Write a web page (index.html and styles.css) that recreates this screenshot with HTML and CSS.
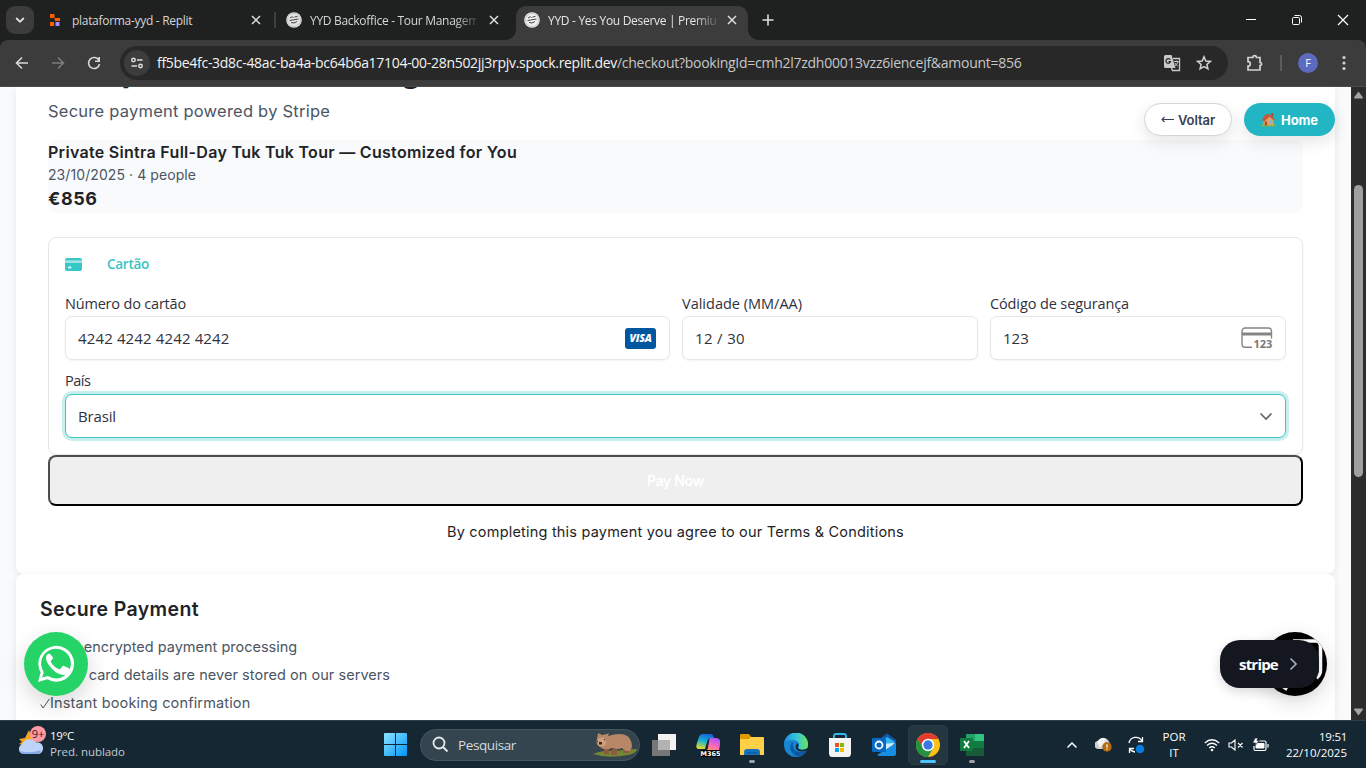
FILE: index.html
```html
<!DOCTYPE html>
<html lang="pt">
<head>
<meta charset="utf-8">
<title>YYD - Yes You Deserve | Premium</title>
<link rel="stylesheet" href="styles.css">
</head>
<body>
<div class="screen">
  <header class="tabstrip">
    <button class="tab-search"><svg width="12" height="12" viewBox="0 0 12 12" fill="none" stroke="#e3e3e3" stroke-width="1.8"><path d="M2.2 4 6 7.8 9.8 4"/></svg></button>
    <div class="tab tab-one">
      <svg class="fav" width="16" height="16" viewBox="0 0 16 16"><path fill="#ff5c00" d="M2 2h4.500v4H2zM6.500 6H12v3H7zM2 10h4v4H2z"/><path fill="#a68cff" d="M7.500 10h4v4h-4z"/></svg>
      <span class="tab-title">plataforma-yyd - Replit</span>
      <svg class="x" width="10" height="10" viewBox="0 0 10 10" stroke="#dedede" stroke-width="1.5"><path d="M1 1l8 8M9 1 1 9"/></svg>
    </div>
    <div class="tab tab-two">
      <svg class="fav" width="16" height="16" viewBox="0 0 16 16"><circle cx="8" cy="8" r="7.800" fill="#e4e4e4"/><circle cx="8" cy="8" r="6.500" fill="none" stroke="#aaa" stroke-width=".6"/><path d="M4 6l2.500-1.300 1 1M8.500 5l3-.6M3.500 8.500l9-1.500M5 10.500q3 1.500 6-1" fill="none" stroke="#444" stroke-width="1"/></svg>
      <span class="tab-title fade">YYD Backoffice - Tour Managem</span>
      <svg class="x" width="10" height="10" viewBox="0 0 10 10" stroke="#dedede" stroke-width="1.5"><path d="M1 1l8 8M9 1 1 9"/></svg>
    </div>
    <div class="tab tab-active">
      <svg class="fav" width="16" height="16" viewBox="0 0 16 16"><circle cx="8" cy="8" r="7.800" fill="#f0f0f0"/><circle cx="8" cy="8" r="6.500" fill="none" stroke="#aaa" stroke-width=".6"/><path d="M4 6l2.500-1.300 1 1M8.500 5l3-.6M3.500 8.500l9-1.500M5 10.500q3 1.500 6-1" fill="none" stroke="#444" stroke-width="1"/></svg>
      <span class="tab-title fade">YYD - Yes You Deserve | Premiu</span>
      <svg class="x" width="10" height="10" viewBox="0 0 10 10" stroke="#dedede" stroke-width="1.5"><path d="M1 1l8 8M9 1 1 9"/></svg>
    </div>
    <svg class="plus" width="12" height="12" viewBox="0 0 12 12" stroke="#dedede" stroke-width="1.6"><path d="M6 .5v11M.5 6h11"/></svg>
    <div class="window-controls">
      <svg width="12" height="12" viewBox="0 0 12 12" stroke="#fff" fill="none"><path d="M1 5.500h10"/></svg>
      <svg width="12" height="12" viewBox="0 0 12 12" stroke="#fff" fill="none"><rect x="1.500" y="3.500" width="7" height="7" rx="1"/><path d="M3.500 1.500h5a2 2 0 0 1 2 2v5"/></svg>
      <svg width="12" height="12" viewBox="0 0 12 12" stroke="#fff" stroke-width="1.200" fill="none"><path d="M1 1l10 10M11 1 1 11"/></svg>
    </div>
  </header>

  <div class="toolbar-back"><div class="toolbar">
    <svg width="16" height="16" viewBox="0 0 16 16" fill="none" stroke="#d8d8d8" stroke-width="1.600"><path d="M14 8H3M8 2.500 2.500 8 8 13.500"/></svg>
    <svg width="16" height="16" viewBox="0 0 16 16" fill="none" stroke="#7c7c7c" stroke-width="1.600"><path d="M2 8h11M8 2.500 13.500 8 8 13.500"/></svg>
    <svg width="16" height="16" viewBox="0 0 16 16" fill="none" stroke="#d8d8d8" stroke-width="1.600"><path d="M13 5.500A5.500 5.500 0 1 0 13.500 9M13.200 2v4.200H9"/></svg>
    <div class="omnibox">
      <div class="site-info"><svg width="14" height="14" viewBox="0 0 14 14" fill="none" stroke="#dedede" stroke-width="1.500"><circle cx="3.500" cy="4" r="1.700"/><path d="M7 4h5.500M1.500 10H7"/><circle cx="10.500" cy="10" r="1.700"/></svg></div>
      <span class="url"><span class="host">ff5be4fc-3d8c-48ac-ba4a-bc64b6a17104-00-28n502jj3rpjv.spock.replit.dev</span><span class="path">/checkout?bookingId=cmh2l7zdh00013vzz6iencejf&amp;amount=856</span></span>
      <svg class="translate" width="18" height="18" viewBox="0 0 18 18"><path fill="#c9c9c9" d="M2.500 1h6l4 13h-10A1.500 1.500 0 0 1 1 12.500v-10A1.500 1.500 0 0 1 2.500 1z"/><path fill="none" stroke="#c9c9c9" stroke-width="1.300" d="M10 4.500h6.500v12H9.500L8.500 14"/><path fill="none" stroke="#282828" stroke-width="1.200" d="M7.300 5.800A2.300 2.300 0 1 0 7.500 7.600H5.500"/><path fill="none" stroke="#c9c9c9" d="M11 7.500h4.500M13.200 6.500v1M14.800 7.700c-.5 2-1.600 3.300-3 4.300M12 9c.7 1.500 1.800 2.500 3 3"/></svg>
      <svg class="star" width="16" height="16" viewBox="0 0 16 16" fill="none" stroke="#d2d2d2" stroke-width="1.500"><path d="M8 1.800 9.800 6l4.500.4-3.400 3 1 4.400L8 11.500l-3.900 2.300 1-4.400-3.400-3L6.200 6z"/></svg>
    </div>
    <svg class="ext" width="18" height="18" viewBox="0 0 18 18" fill="none" stroke="#d2d2d2" stroke-width="1.700"><path d="M2 3.500h4.800a1.800 1.800 0 0 1 3.600 0H14v5a1.600 1.600 0 0 1 0 3.200V16H2v-3.800a2.200 2.200 0 0 0 0-4.600z"/></svg>
    <i class="divider"></i>
    <span class="avatar">F</span>
    <svg class="menu" width="4" height="16" viewBox="0 0 4 16" fill="#d2d2d2"><circle cx="2" cy="2.500" r="1.600"/><circle cx="2" cy="8" r="1.600"/><circle cx="2" cy="13.500" r="1.600"/></svg>
  </div></div>

  <div class="viewport">
    <main class="page">
      <section class="card checkout">
        <h1>Complete Your Booking</h1>
        <p class="sub">Secure payment powered by Stripe</p>
        <div class="summary">
          <h2>Private Sintra Full-Day Tuk Tuk Tour — Customized for You</h2>
          <p class="when">23/10/2025 · 4 people</p>
          <p class="price">€856</p>
        </div>
        <div class="payment">
          <div class="method">
            <svg width="17" height="13" viewBox="0 0 17 13"><path fill="#36c8c8" d="M2 0h13a2 2 0 0 1 2 2v.7H0V2a2 2 0 0 1 2-2zM0 4.500h17V11a2 2 0 0 1-2 2H2a2 2 0 0 1-2-2z"/><path fill="#a4e4e4" d="M0 2.700h17v1.800H0z"/><rect x="3" y="8.500" width="3.500" height="2" rx="1" fill="#e8ffff"/></svg>
            <span>Cartão</span>
          </div>
          <div class="fields">
            <div><label class="number-label">Número do cartão</label>
              <div class="input"><span class="number">4242 4242 4242 4242</span><span class="visa">VISA</span></div></div>
            <div><label>Validade (MM/AA)</label>
              <div class="input"><span class="expiry">12 / 30</span></div></div>
            <div><label class="code-label">Código de segurança</label>
              <div class="input"><span>123</span>
                <svg class="cvc" width="32" height="22" viewBox="0 0 32 22" fill="none" stroke="#858585" stroke-width="1.400"><path d="M11 20.300H4a3 3 0 0 1-3-3V4a3 3 0 0 1 3-3h23.500a3 3 0 0 1 3 3v7.500"/><path d="M1 7h29.500" stroke-width="3"/><text x="12.500" y="21" class="cvc-text">123</text></svg></div></div>
          </div>
          <label class="country-label">País</label>
          <div class="input select"><span>Brasil</span><svg width="14" height="9" viewBox="0 0 14 9" fill="none" stroke="#666" stroke-width="1.700"><path d="M1.500 1.500 7 7l5.500-5.500"/></svg></div>
        </div>
        <button class="pay">Pay Now</button>
        <p class="terms">By completing this payment you agree to our Terms &amp; Conditions</p>
      </section>
      <section class="card secure">
        <h3>Secure Payment</h3>
        <ul>
          <li class="ssl">✓SSL encrypted payment processing</li>
          <li class="stored">✓Your card details are never stored on our servers</li>
          <li class="instant"><svg width="10" height="11" viewBox="0 0 10 11" fill="none" stroke="#4b5563"><path d="M.8 6.500 3 10 9.500.8"/></svg>Instant booking confirmation</li>
        </ul>
      </section>
    </main>
    <nav class="floating-nav">
      <button class="back"><svg width="13" height="9" viewBox="0 0 13 9" fill="none" stroke="#374151" stroke-width="1.100"><path d="M13 4.500H1M3.500 2l-2.500 2.500L3.500 7"/></svg><span>Voltar</span></button>
      <button class="home"><svg width="15" height="14" viewBox="0 0 16 15"><path fill="#7fb24a" d="M0 12h16v2.500H1z"/><path fill="#dda36b" d="M2.500 7 7 3l6.500 3v7h-11z"/><path fill="#c8563e" d="M1 7.500 4.500 1.500 9 1l6 6-1 1-5-4-5.500 5z"/><path fill="#a0522d" d="M11 0h2v4h-2zM4 9h2.500v4.500H4z"/><path fill="#67bfe8" d="M9 8h3v3H9z"/></svg><span>Home</span></button>
    </nav>
    <div class="whatsapp"><svg width="38" height="38" viewBox="0 0 24 24" fill="#fff"><path d="M.6 23.400l1.700-6A11.300 11.300 0 1 1 6.600 21.700zM6.900 19.600a9.400 9.400 0 1 0-2.600-2.500l-1 3.500z"/><path d="M8.800 6.300c-.4-.9-.8-.8-1.300-.8-.6 0-1.800.7-1.800 2.700 0 2 1.500 4 1.700 4.200.2.300 2.900 4.500 7.100 6.100 3.500 1.400 5.700-.4 5.900-1.600.2-1.200.2-1.900 0-2.100l-3.300-1.600c-.5-.2-.8-.1-1.100.3l-1.300 1.600c-.3.300-.6.300-1 .1-1.700-.8-3.800-2.300-4.900-4.500-.2-.4 0-.7.2-.9l.9-1.100c.2-.3.200-.6.100-.9z"/></svg></div>
    <div class="chat"><svg width="64" height="64" viewBox="0 0 64 64" fill="none" stroke="#fff"><path d="M30 9h23q4.500 0 4.500 6v23q0 5-4 8" stroke-width="3.500"/><path d="M20 55.500l3 2 1-2z" stroke-width="2"/></svg></div>
    <div class="stripe"><span>stripe</span><svg width="9" height="14" viewBox="0 0 9 14" fill="none" stroke="#a3acba" stroke-width="1.700"><path d="M1.500 1.500 7 7l-5.500 5.500"/></svg></div>
    <aside class="scrollbar">
      <svg width="9" height="8" viewBox="0 0 9 8" fill="#a3a3a3"><path d="M4.500.5 9 6.500q0 1-1 1H1q-1 0-1-1z"/></svg>
      <i></i>
      <svg width="9" height="8" viewBox="0 0 9 8" fill="#a3a3a3"><path d="M4.500 7.500 9 1.500q0-1-1-1H1q-1 0-1 1z"/></svg>
    </aside>
  </div>

  <footer class="taskbar">
    <div class="weather">
      <svg width="28" height="30" viewBox="0 0 28 30"><path fill="#f8a51b" d="M11 4l2 5 8-1-4 12-8 3-2-3-6-2 3-2-3-3 6-1z"/><path fill="#bdd4f8" d="M5 28a5 5 0 0 1-1-9.500 8 8 0 0 1 14-2 5.500 5.500 0 0 1 2.500 11.500z"/><path fill="#87a9e8" d="M2 25q10 3 21-1-1 4-4 4H5q-2 0-3-3z"/><circle cx="20" cy="8" r="8" fill="#ff99a4"/><text x="20" y="12" class="badge-text">9+</text></svg>
      <div><b>19°C</b><br><span>Pred. nublado</span></div>
    </div>
    <div class="apps">
      <svg class="start" width="24" height="24" viewBox="0 0 24 24"><defs><linearGradient id="win" x2="1" y2="1"><stop stop-color="#8de4ff"/><stop offset="1" stop-color="#0095fa"/></linearGradient></defs><path fill="url(#win)" d="M1 0h10v11H0V1q0-1 1-1zM12 0h10q1 0 1 1v10H12zM0 12h11v11H1q-1 0-1-1zM12 12h11v10q0 1-1 1H12z"/></svg>
      <div class="search"><svg width="17" height="17" viewBox="0 0 17 17" fill="none" stroke="#e4e9ec" stroke-width="1.800"><circle cx="7" cy="7" r="5.500"/><path d="M11 11l4.500 4.500"/></svg><span>Pesquisar</span>
        <svg class="wombat" width="46" height="26" viewBox="0 0 46 26"><path fill="#738632" d="M1 22q10-4 22-3 12-2 22-2 0 4-9 6-20 4-35-1z"/><path fill="#8c5b42" d="M12 16h5v6h-5zM20 17h5v6h-6zM31 15h6v6h-6z"/><path fill="#b88767" d="M16 4Q33-1 38 7q4 7 0 12h-4l-4-3q-4 2-10 0-8 3-12-1-5-3-3-8l1-6 4 2 5-1 2-1z"/><path fill="#d0a180" d="M6 7q5-3 8 0v5q-4 4-8 1z"/><path fill="#3b2820" d="M7 10h3v2.500H7zM5 9h1v1H5zM12 7h1.200v1.200H12z"/></svg>
      </div>
      <svg width="24" height="24" viewBox="0 0 24 24"><path fill="#f2f2f2" d="M6 1h18v16H6z"/><path fill="#777" d="M0 7h18v16H0z"/><path fill="#b2b2b2" d="M6 7h12v10H6z"/></svg>
      <svg width="24" height="24" viewBox="0 0 24 24"><defs><linearGradient id="ca" x1=".6" x2=".3" y2="1"><stop stop-color="#1262df"/><stop offset=".5" stop-color="#19b4d3"/><stop offset="1" stop-color="#e9dc24"/></linearGradient><linearGradient id="cb" x1=".7" x2=".3" y2="1"><stop stop-color="#a655ff"/><stop offset=".6" stop-color="#ff6bb5"/><stop offset="1" stop-color="#ff9b56"/></linearGradient></defs><path fill="url(#ca)" d="M7 1h8q2 0 3 4h-3q-3 0-4 4l-2 7H3q-4 0-2-6l2-6q1-3 4-3z"/><path fill="url(#cb)" d="M14 5h6q5 0 4 6l-1 7H9q3-1 3-4l1-5q0-3 1-4z"/><path fill="#080808" d="M5 17h19v7H5z"/><text x="14.500" y="23" class="m365">M365</text></svg>
      <svg width="24" height="24" viewBox="0 0 24 24"><path fill="#e19a00" d="M0 2q0-1 1-1h8l3 4v4H0z"/><path fill="#ffcf48" d="M0 6h9l2-2h12q1 0 1 1v17H0z"/><path fill="#1672bd" d="M4 22v-3q0-3 3-3h10q3 0 3 3v3z"/><path fill="#0b579b" d="M7 19h10v1.500H7z"/></svg>
      <svg width="24" height="24" viewBox="0 0 24 24"><defs><linearGradient id="ea" x2="1"><stop stop-color="#1b8fe0"/><stop offset=".5" stop-color="#35c3df"/><stop offset="1" stop-color="#6be45b"/></linearGradient></defs><circle cx="12" cy="12" r="12" fill="#1686d2"/><path fill="url(#ea)" d="M0 11A12 12 0 0 1 24 12q0 5-6 5-5 0-3-3 1-7-7-7-6 0-8 4z"/><path fill="#0c59a4" d="M8 9q-5 8 4 14 7 1 10-5-8 3-12-2-2-3-1-6z"/><path fill="#142733" d="M14 10q-4 3-1 7 4 3 11 0v-2q-5 3-9 1-2-1-1-3 1-2 0-3z"/></svg>
      <svg width="24" height="24" viewBox="0 0 24 24"><path fill="none" stroke="#35b8ee" stroke-width="1.800" d="M6 6V3q0-2 2-2h8q2 0 2 2v3"/><path fill="#f4f4f4" d="M1 5h22v15q0 4-3 4H4q-3 0-3-4z"/><path fill="#f25022" d="M7 10h4v4H7z"/><path fill="#7fba00" d="M12 10h4v4h-4z"/><path fill="#00a4ef" d="M7 15h4v4H7z"/><path fill="#ffb900" d="M12 15h4v4h-4z"/></svg>
      <svg width="24" height="24" viewBox="0 0 24 24"><path fill="#1359a8" d="M5 8 14 1q1-1 2 0l8 6v10H5z"/><path fill="#35b6ee" d="M6 9l9-5 8 5-9 7z"/><path fill="#cdeeff" d="M8 11l15-1-9 8z"/><path fill="#168de0" d="M5 22 24 10v11q0 2-2 2H7z"/><rect y="5" width="14" height="14" rx="1" fill="#0868c6"/><circle cx="7" cy="12" r="3.500" fill="none" stroke="#fff" stroke-width="1.800"/></svg>
      <div class="active-app"><svg width="24" height="24" viewBox="0 0 24 24"><circle cx="12" cy="12" r="12" fill="#fbc116"/><path fill="#e33b2e" d="M1.600 6A12 12 0 0 1 22.400 6H12L6.800 15z"/><path fill="#229342" d="M1.600 6A12 12 0 0 0 12 24l5.200-9-10.400 0z"/><circle cx="12" cy="12" r="6.200" fill="#fff"/><circle cx="12" cy="12" r="4.700" fill="#3b78e7"/></svg></div>
      <svg width="24" height="24" viewBox="0 0 24 24"><path fill="#21a366" d="M6 1h9v7H6z"/><path fill="#33c481" d="M15 1h8q1 0 1 1v6h-9z"/><path fill="#107c41" d="M6 8h18v8H6z"/><path fill="#185c37" d="M6 15h18v7q0 1-1 1H6z"/><rect y="5" width="13" height="13" rx="1" fill="#107c41"/><path fill="none" stroke="#fff" stroke-width="1.800" d="M4 8l5 7M9 8l-5 7"/></svg>
      <i class="run run-folder"></i><i class="run run-chrome"></i><i class="run run-excel"></i>
    </div>
    <div class="tray">
      <svg width="12" height="8" viewBox="0 0 12 8" fill="none" stroke="#fff" stroke-width="1.500"><path d="M1.500 6.500 6 2l4.500 4.500"/></svg>
      <svg class="cloud" width="18" height="16" viewBox="0 0 18 16"><path fill="#cfcfcf" d="M4 12A4 4 0 0 1 3 4q5-6 10-1l3 5-5 4z"/><path fill="#f3f3f3" d="M2 5q5-7 9-2l-6 8z"/><circle cx="12" cy="10" r="4.700" fill="#b56a0c"/><path stroke="#fff" stroke-width="1.200" d="M12 7.200v3.500M12 11.600v1.200"/></svg>
      <svg class="sync" width="18" height="18" viewBox="0 0 18 18" fill="none" stroke="#fff" stroke-width="1.300"><path d="M2 7A7 7 0 0 1 15 5M15.500 1v4.500H11M7 12.500H2.500V17M2.500 12.500A7 7 0 0 0 8 16"/><circle cx="13" cy="13" r="4.300" fill="#087ddf" stroke="none"/></svg>
      <div class="lang">POR<br>IT</div>
      <svg class="wifi" width="16" height="14" viewBox="0 0 16 14" fill="none" stroke="#fff" stroke-width="1.300"><path d="M.8 5q7-6.500 14.400 0M3 7.500q5-4.500 10 0M5.200 10q2.800-2.500 5.600 0"/><circle cx="8" cy="12" r="1.300" fill="#fff" stroke="none"/></svg>
      <svg class="vol" width="16" height="12" viewBox="0 0 16 12" fill="none" stroke="#fff" stroke-width="1.100"><path d="M1 4h2.500L7 1v10L3.500 8H1zM10 4l4.500 4.500M14.500 4 10 8.500"/></svg>
      <svg class="battery" width="17" height="14" viewBox="0 0 17 14"><rect x="3.500" y="5" width="9" height="5.500" rx="1" fill="#fff"/><path fill="none" stroke="#fff" stroke-width="1.200" d="M6 3h6.500q1.500 0 1.500 1.500V11q0 1.500-1.500 1.500h-9Q2 12.500 2 11V8M16 6v3.500"/><path stroke="#142733" fill="#fff" d="M3 0h3L5 2.500h2.500L2.500 8 3.500 5H.5z" stroke-width=".8"/></svg>
      <div class="clock"><span class="time">19:51</span><br>22/10/2025</div>
    </div>
  </footer>
</div>
</body>
</html>
```
FILE: styles.css
```css
* { box-sizing: border-box; }
body { margin: 0; font-family: "Open Sans", "Noto Sans", sans-serif; overflow: hidden; }
h1, h2, h3, p, ul { margin: 0; padding: 0; }
button { font-family: inherit; }
svg { display: block; flex: none; }
.screen { width: 1366px; height: 768px; display: flex; flex-direction: column; overflow: hidden; }

.tabstrip { height: 40px; flex: none; background: #1f2121; display: flex; align-items: center; padding-left: 6px; color: #d5d5d5; font-size: 12px; letter-spacing: -.3px; }
.tab-search { width: 28px; height: 28px; border: 0; border-radius: 9px; background: #3c3c3c; padding: 0; display: grid; place-items: center; }
.tab { display: flex; align-items: center; height: 40px; }
.tab-title { flex: 1; min-width: 0; white-space: nowrap; line-height: 20px; padding-top: 1px; }
.tab .fav { margin-right: 8px; }
.tab-one { width: 241px; padding: 0 14px 0 14px; }
.tab-two { width: 241px; padding: 0 17px 0 11px; position: relative; }
.tab-two::before { content: ""; position: absolute; left: -1px; top: 12px; width: 2px; height: 16px; background: #3d3f3f; }
.fade { margin-right: 13px; mask-image: linear-gradient(90deg, #000 87%, rgba(0, 0, 0, .2)); }
.tab-active { width: 232px; height: 34px; align-self: flex-end; background: #3c3c3c; border-radius: 10px 10px 0 0; padding: 0 11px 6px 8px; position: relative; color: #e6e6e6; }
.tab-active .fade { margin-right: 11px; }
.tab-active::before, .tab-active::after { content: ""; position: absolute; bottom: 0; width: 10px; height: 10px; }
.tab-active::before { left: -10px; background: radial-gradient(circle at 0 0, transparent 9.500px, #3c3c3c 10px); }
.tab-active::after { right: -10px; background: radial-gradient(circle at 100% 0, transparent 9.500px, #3c3c3c 10px); }
.plus { margin-left: 14px; }
.window-controls { margin-left: auto; display: flex; gap: 34px; padding-right: 17px; }

.toolbar-back { background: #1f2121; flex: none; }
.toolbar { height: 47px; background: #3c3c3c; border-radius: 8px 8px 0 0; border-bottom: 1px solid #4a4a4a; display: flex; align-items: center; padding: 0 20px 0 14px; }
.toolbar > svg:nth-child(2) { margin-left: 20px; }
.toolbar > svg:nth-child(3) { margin-left: 20px; }
.omnibox { margin-left: 18px; width: 1108px; height: 34px; border-radius: 17px; background: #282828; display: flex; align-items: center; padding: 0 16px 0 4px; }
.site-info { width: 26px; height: 26px; border-radius: 50%; background: #3c3c3c; display: grid; place-items: center; }
.url { margin-left: 7px; font-size: 14px; line-height: 20px; white-space: nowrap; flex: 1; }
.host { color: #f4f4f4; letter-spacing: -.297px; }
.path { color: #c7c7c7; letter-spacing: -.265px; }
.translate { margin-right: 15px; }
.ext { margin-left: 18px; }
.divider { width: 2px; height: 16px; background: #5c5c5c; margin-left: 16px; }
.avatar { width: 20px; height: 20px; border-radius: 50%; background: #5c6bc0; color: #fff; font-size: 11px; line-height: 20px; text-align: center; margin-left: 16px; }
.menu { margin-left: 24px; }

.viewport { height: 633px; flex: none; position: relative; overflow: hidden; background: #f8fafc; display: flex; justify-content: space-between; font-family: Inter, sans-serif; color: #1f2326; }
.page { width: 1319px; height: 633px; margin-left: 16px; display: flex; flex-direction: column; }
.card { background: #fff; box-shadow: 0 2px 8px rgba(0, 0, 0, .08); }
.checkout { height: 487px; flex: none; border-radius: 0 0 8px 8px; padding: 0 32px; }
h1 { font-size: 32px; font-weight: 700; line-height: 36px; height: 36px; letter-spacing: .33px; margin: -34px 0 8px; }
.sub { font-size: 16.500px; letter-spacing: .23px; line-height: 28px; margin-bottom: 15px; color: #4b5563; }
.summary { height: 73px; background: #f8fafc; border-radius: 8px; margin-bottom: 24px; }
.summary h2 { font-size: 16px; line-height: 24px; font-weight: 600; letter-spacing: .298px; }
.when { font-size: 14px; line-height: 22px; color: #4b5563; letter-spacing: .077px; }
.price { font-size: 18px; line-height: 26px; font-weight: 700; letter-spacing: .566px; }
.payment { height: 218px; border: 1px solid #e6e6e6; border-radius: 8px; padding: 16px 16px 0; font-family: "Open Sans", "Noto Sans", sans-serif; box-shadow: 0 1px 2px rgba(0, 0, 0, .03); color: #30313d; }
.method { display: flex; align-items: center; gap: 25px; height: 21px; color: #36c5c5; font-size: 13.500px; line-height: 18px; font-weight: 600; letter-spacing: -.27px; }
.method span { margin-top: -1px; }
.fields { display: grid; grid-template-columns: 605px 296px 296px; gap: 12px; margin-top: 18px; }
label { display: block; font-size: 14.500px; line-height: 22px; height: 23px; }
.number-label { letter-spacing: -.189px; }
.code-label { letter-spacing: -.118px; }
.input { height: 44px; border: 1px solid #e6e6e6; border-radius: 7px; box-shadow: 0 1px 2px rgba(0, 0, 0, .05); background: #fff; display: flex; align-items: center; justify-content: space-between; padding: 0 12px; font-size: 15px; }
.number { letter-spacing: .136px; }
.expiry { letter-spacing: .342px; }
.visa { width: 31px; height: 21px; margin-right: 1px; border-radius: 3px; background: #00579f; color: #fff; font: italic 800 10.500px/21px "Open Sans", sans-serif; text-align: center; letter-spacing: -.2px; }
.cvc-text { font: 700 11px "Open Sans", sans-serif; fill: #777; stroke: none; }
.country-label { margin-top: 10px; height: 24px; letter-spacing: -.465px; }
.select { border-color: #3ac5bf; box-shadow: 0 0 0 3px #c8eeed; letter-spacing: -.148px; }
.pay { display: block; width: 100%; height: 51px; border-radius: 8px; border: 2px solid; border-color: #4d4d4d #000 #000 #4d4d4d; background: #efefef; color: #fff; font-size: 14px; font-weight: 600; letter-spacing: -.31px; }
.terms { text-align: center; font-size: 14.500px; line-height: 20px; margin-top: 16px; letter-spacing: .2px; }
.secure { flex: 1; border-radius: 8px 8px 0 0; padding: 23px 24px 0; }
h3 { font-size: 19.500px; line-height: 24px; font-weight: 600; margin-bottom: 12px; letter-spacing: .36px; }
ul { list-style: none; color: #4b5563; }
li { font-size: 14.500px; line-height: 28px; white-space: nowrap; }
.ssl { letter-spacing: 0; }
.stored { letter-spacing: .05px; }
.instant { display: flex; align-items: center; letter-spacing: .15px; }

.floating-nav { position: absolute; left: 1144px; top: 16px; display: flex; gap: 12px; }
.floating-nav button { height: 33px; border-radius: 17px; display: flex; align-items: center; justify-content: center; gap: 4px; padding: 0; font-size: 13px; font-weight: 600; letter-spacing: -.08px; box-shadow: 0 6px 16px rgba(0, 0, 0, .1); }
.back { width: 88px; background: #fff; border: 1px solid #d1d5db; color: #374151; }
.home { width: 91px; background: #22b6c4; border: 0; color: #fff; }
.floating-nav .home { font-weight: 700; gap: 5px; }
.whatsapp { position: absolute; left: 24px; top: 545px; width: 64px; height: 64px; border-radius: 50%; background: #25d366; display: grid; place-items: center; box-shadow: 0 8px 22px rgba(0, 0, 0, .16); }
.chat { position: absolute; left: 1263px; top: 545px; width: 64px; height: 64px; border-radius: 50%; background: #000; overflow: hidden; box-shadow: 0 6px 22px rgba(0, 0, 0, .14); }
.stripe { position: absolute; left: 1220px; top: 553px; width: 99px; height: 48px; border-radius: 20px; background: #14171f; color: #fff; display: flex; align-items: center; gap: 10px; padding-left: 19px; font: 700 15px "Open Sans", sans-serif; letter-spacing: -.8px; box-shadow: 0 4px 12px rgba(0, 0, 0, .15); }
.stripe span { width: 40px; }
.scrollbar { width: 15px; background: #2c2c2c; display: flex; flex-direction: column; align-items: center; justify-content: space-between; padding: 4px 0; }
.scrollbar i { width: 9px; height: 292px; border-radius: 5px; background: #9f9f9f; margin: 86px 0 auto; }

.taskbar { height: 48px; flex: none; background: #142733; border-top: 1px solid #2e3f49; color: #fff; display: flex; font-size: 11.500px; line-height: 16px; }
.weather { display: flex; gap: 4px; padding: 5px 0 0 18px; width: 384px; flex: none; }
.weather b { font-weight: 400; letter-spacing: -.33px; }
.weather > div { padding-top: 2px; }
.weather > div span { color: #c4cbd0; letter-spacing: -.04px; }
.badge-text { font: 11px "Open Sans", sans-serif; text-anchor: middle; fill: #222; }
.apps { display: flex; align-items: center; gap: 20px; width: 610px; flex: none; position: relative; }
.start { margin-right: -8px; }
.search { width: 220px; height: 32px; margin-right: -8px; border-radius: 16px; background: #34454f; border: 1px solid #455660; display: flex; align-items: center; padding: 0 1px 0 11px; color: #d5dade; font-size: 13.500px; letter-spacing: -.4px; }
.search > span { margin-left: 9px; }
.wombat { margin-left: auto; }
.m365 { font: 700 6.500px "DejaVu Sans", sans-serif; text-anchor: middle; fill: #fff; }
.active-app { width: 40px; height: 40px; margin: 0 -8px; display: grid; place-items: center; border-radius: 5px; background: #24363f; border: 1px solid #2b3c45; }
.run { position: absolute; top: 39px; width: 6px; height: 3px; border-radius: 2px; background: #9ba1a5; }
.run-folder { left: 365px; }
.run-chrome { left: 536px; width: 16px; background: #4cc2ff; }
.run-excel { left: 585px; }
.tray { display: flex; align-items: center; width: 300px; margin-left: auto; padding-right: 19px; }
.cloud { margin-left: 17px; }
.sync { margin-left: 14px; }
.lang { width: 30px; margin-left: 14px; text-align: center; }
.wifi { margin-left: 15px; }
.vol { margin-left: 8px; }
.battery { margin-left: 8px; }
.clock { margin-left: auto; text-align: right; white-space: nowrap; }
.time { letter-spacing: -.27px; }
```
